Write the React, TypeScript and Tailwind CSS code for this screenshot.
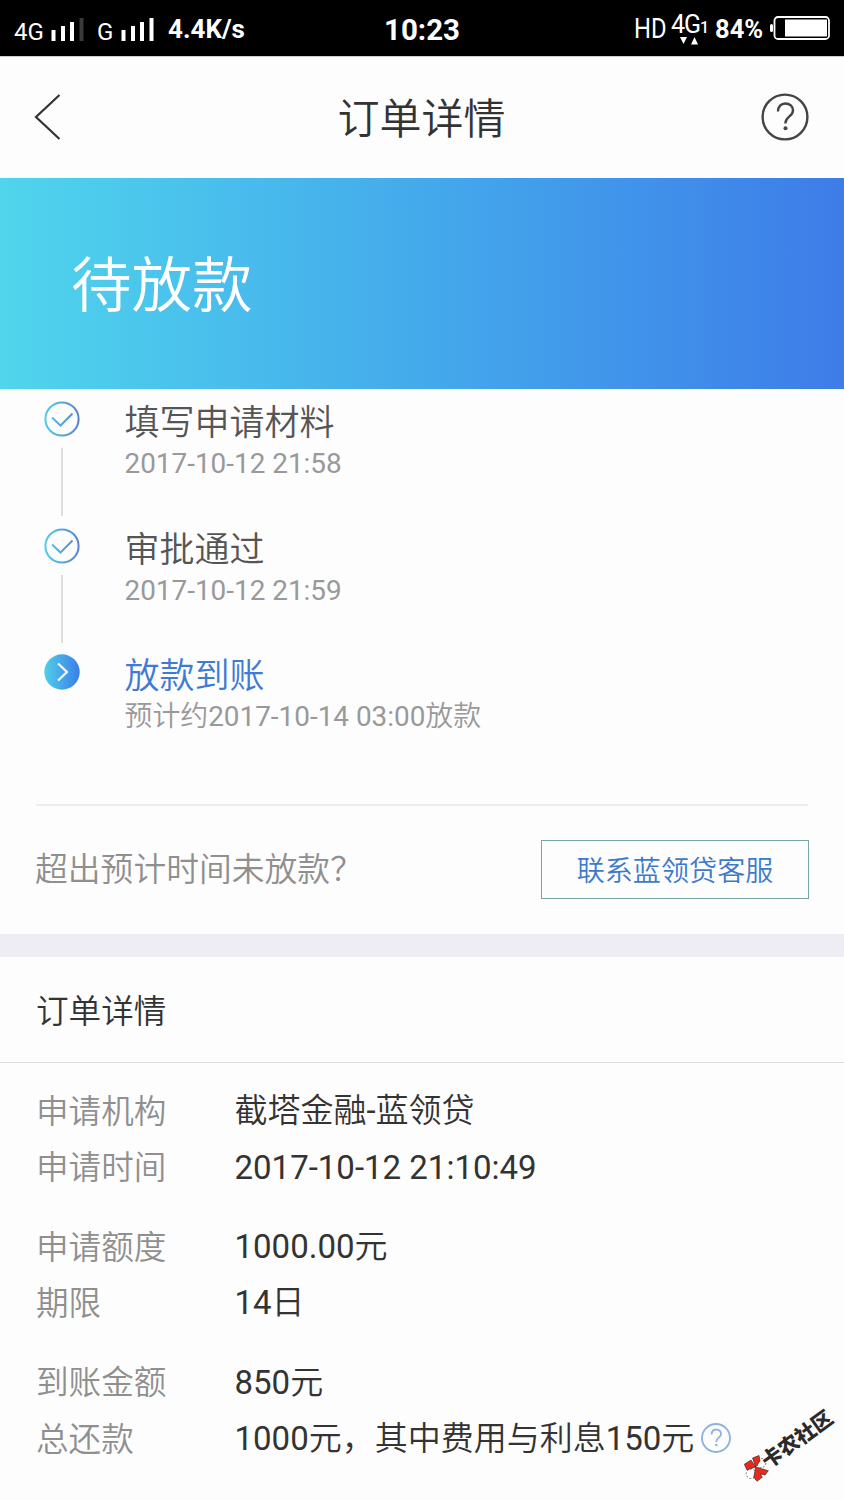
import React from 'react';

const steps = [
  { title: '填写申请材料', note: '2017-10-12 21:58', done: true },
  { title: '审批通过', note: '2017-10-12 21:59', done: true },
  { title: '放款到账', note: '预计约2017-10-14 03:00放款', done: false },
];

const details = [
  [
    { label: '申请机构', value: '截塔金融-蓝领贷' },
    { label: '申请时间', value: '2017-10-12 21:10:49' },
  ],
  [
    { label: '申请额度', value: '1000.00元' },
    { label: '期限', value: '14日' },
  ],
  [
    { label: '到账金额', value: '850元' },
    { label: '总还款', value: '1000元，其中费用与利息150元', help: true },
  ],
];

const SignalBars = ({ dimLast = false }: { dimLast?: boolean }) => (
  <svg className="mt-1" width="34" height="24" viewBox="0 0 34 24" fill="#fff">
    <rect x="0.5" y="12" width="4" height="11" />
    <rect x="10" y="8" width="4" height="15" />
    <rect x="19" y="4" width="4" height="19" />
    <rect x="28.5" y="0" width="4" height="23" fill={dimLast ? '#3a3a3a' : '#fff'} />
  </svg>
);

const HelpIcon = ({ size, color, width }: { size: number; color: string; width: number }) => (
  <svg width={size} height={size} viewBox="0 0 48 48" fill="none" stroke={color} strokeWidth={width}>
    <circle cx="24" cy="24" r="22.4" />
    <path d="M17 18.5C17 13.5 20 10.5 24.3 10.5C28.8 10.5 32 13.4 32 17.4C32 23.5 24.3 23.5 24.3 30.5" />
    <circle cx="24.5" cy="35.2" r="2" fill={color} stroke="none" />
  </svg>
);

const StepIcon = ({ done, id }: { done: boolean; id: string }) => (
  <svg width="36" height="36" viewBox="0 0 36 36" fill="none">
    <defs>
      <linearGradient id={id} gradientUnits="userSpaceOnUse" x1="0" y1="0" x2="36" y2="0">
        <stop offset="0" stopColor="#50cfe9" />
        <stop offset="1" stopColor={done ? '#5980d0' : '#3b7de9'} />
      </linearGradient>
    </defs>
    {done ? (
      <g stroke={`url(#${id})`} strokeWidth="2">
        <circle cx="18" cy="18" r="16.6" />
        <path d="M8 16.5L16.5 24.5L28.5 12.5" />
      </g>
    ) : (
      <g>
        <circle cx="18" cy="18" r="17.7" fill={`url(#${id})`} />
        <path d="M14 9.5L23 18L14 26.5" stroke="#fff" strokeWidth="2.2" />
      </g>
    )}
  </svg>
);

const StatusBar = () => (
  <div className="relative flex h-14 items-center justify-between bg-black pr-3.5 pl-3.5 text-white">
    <div className="flex items-center">
      <span className="w-[37px] pt-2 text-[24px] leading-7">4G</span>
      <SignalBars dimLast />
      <span className="ml-3 w-6 pt-2 text-[24px] leading-7">G</span>
      <SignalBars />
      <span className="ml-[13px] pt-0.5 text-[26px] leading-8 font-bold whitespace-nowrap">4.4K/s</span>
    </div>
    <span className="absolute inset-x-0 top-3.5 text-center text-[29.5px] leading-8 font-bold">10:23</span>
    <div className="flex items-center">
      <span className="w-[35px] origin-left scale-x-[0.88] pt-0.5 text-[27px] leading-8">HD</span>
      <div className="flex w-[31px] flex-col pt-0.5 pl-0.5">
        <span className="text-[25px] leading-6 tracking-[-1px]">4G</span>
        <svg className="ml-2" width="20" height="8" viewBox="0 0 20 8" fill="#fff">
          <path d="M1 0H8L4.5 7Z" />
          <path d="M12 7.5H19L15.5 0Z" />
        </svg>
      </div>
      <span className="mr-[7px] w-2 text-[16px] leading-4 font-medium">1</span>
      <span className="w-[55px] pt-0.5 text-[25.5px] leading-8 font-bold">84%</span>
      <svg width="60" height="24" viewBox="0 0 60 24" fill="none">
        <rect x="0" y="8" width="3" height="8" rx="1.5" fill="#fff" />
        <rect x="4.5" y="1" width="54.5" height="22" rx="3.5" stroke="#fff" strokeWidth="1.8" />
        <rect x="15" y="3.5" width="42" height="17" fill="#fff" />
      </svg>
    </div>
  </div>
);

const App = () => {
  return (
    <div className="relative h-[1500px] w-[844px] overflow-hidden bg-[#fdfdfd] font-[Roboto,'Noto_Sans_CJK_SC_DemiLight','Noto_Sans_CJK_SC',sans-serif] text-[#333]">
      <StatusBar />

      <header className="flex h-[122px] items-center justify-between border-t border-[#ccc] pr-[35px] pb-0.5 pl-[34px]">
        <svg width="48" height="46" viewBox="0 0 48 46" fill="none" stroke="#333" strokeWidth="2.2">
          <path d="M25.5 1L2 23L25.5 45" />
        </svg>
        <h1 className="pt-1.5 text-[42px] leading-[60px]">订单详情</h1>
        <HelpIcon size={48} color="#444" width={2.4} />
      </header>

      <div className="flex h-[211px] items-center bg-linear-to-r from-[#50d5ec] to-[#3e7ce8] pt-1.5 pl-[71px] text-[60.5px] leading-[72px] text-white">
        待放款
      </div>

      <section className="h-[545px] px-9 pt-2.5">
        {steps.map((step, index) => (
          <div key={step.title} className="flex h-[126.5px] pl-2">
            <div className="flex w-9 flex-col items-center pt-[2.4px]">
              <StepIcon done={step.done} id={`step-${index}`} />
              {step.done && <div className="mt-[11px] h-[68px] w-0.5 bg-[#dedede]"></div>}
            </div>
            <div className="ml-[44.5px]">
              <p className={`pt-0.5 text-[35px] leading-[46px] ${step.done ? 'text-[#555]' : 'text-[#3f7bd4]'}`}>
                {step.title}
              </p>
              <p className="-mt-0.5 text-[27.9px] leading-[38px] text-[#999]">{step.note}</p>
            </div>
          </div>
        ))}
        <div className="mt-[25.5px] flex items-center justify-between border-t-2 border-[#eee] pt-[33.5px]">
          <span className="-ml-px h-[58px] pt-px text-[32.8px] leading-[58px] text-[#8f8f8f]">超出预计时间未放款？</span>
          <button className="-mr-px h-[59px] w-[268px] border border-[#7ba4a8] pt-1.5 text-[28.1px] text-[#3d7aca]">联系蓝领贷客服</button>
        </div>
      </section>

      <div className="h-[23px] bg-[#eeedf3]"></div>

      <section>
        <h2 className="flex h-[106px] items-center border-b border-[#ddd] px-9 pt-1.5 text-[32.6px]">订单详情</h2>
        <div className="flex flex-col gap-[23.5px] px-9 pt-5">
          {details.map((group, index) => (
            <div key={index}>
              {group.map((item) => (
                <div key={item.label} className="flex h-[56.2px] items-center text-[32.6px]">
                  <span className="w-[198.5px] pt-0.5 text-[#8f8f8f]">{item.label}</span>
                  <span className="text-[33px] whitespace-nowrap">{item.value}</span>
                  {item.help && (
                    <span className="mb-0.5 ml-[7px]">
                      <HelpIcon size={30} color="#8eb1df" width={3} />
                    </span>
                  )}
                </div>
              ))}
            </div>
          ))}
        </div>
      </section>

      {/* Community stamp in the bottom corner */}
      <div className="absolute top-[1455px] left-[743px] flex items-center">
        <svg width="26" height="27" viewBox="0 0 26 27" stroke="#222" strokeWidth="0.6">
          <circle cx="18.3" cy="8" r="4.6" fill="#fff" strokeDasharray="2 1.5" />
          <circle cx="8" cy="18.7" r="4.8" fill="#fff" strokeDasharray="2 1.5" />
          <path d="M1.3 9.3L8 5L12.7 12L4 15Z" fill="#e8291c" />
          <path d="M9.5 3L16 0.5L17 6L12.7 12Z" fill="#e8291c" />
          <path d="M12.7 12L25.3 15.7L22 20L17.3 19L19.3 22.3L14 26.3L10.7 22.3Z" fill="#e8291c" />
        </svg>
        <span className="-mt-3.5 -ml-1.5 origin-left rotate-[-36deg] font-['Noto_Sans_CJK_SC',sans-serif] text-[20.5px] leading-6 font-black whitespace-nowrap text-[#2a2a2a]">
          卡农社区
        </span>
      </div>
    </div>
  );
};

export default App;
